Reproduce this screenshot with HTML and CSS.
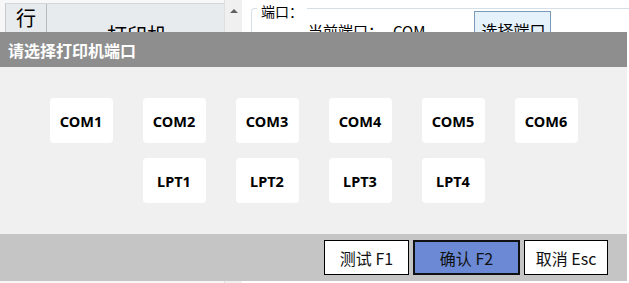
FILE: index.html
```html
<!DOCTYPE html>
<html lang="zh">
<head>
<meta charset="utf-8">
<title>选择打印机端口</title>
<link rel="stylesheet" href="styles.css">
</head>
<body>
<div class="app">
  <div class="table-panel">
    <div class="table-head">
      <div class="cell cell-row">行</div>
      <div class="cell cell-name">打印机</div>
    </div>
  </div>
  <div class="scrollbar"><span class="arrow"></span></div>
  <div class="settings">
    <div class="group">
      <div class="group-title">端口：</div>
      <div class="group-row">
        <span class="label">当前端口：</span>
        <span class="value">COM</span>
        <span class="pick-btn">选择端口</span>
      </div>
    </div>
  </div>
</div>

<div class="dialog">
  <div class="dialog-title">请选择打印机端口</div>
  <div class="dialog-body">
    <div class="ports">
      <div class="port">COM1</div>
      <div class="port">COM2</div>
      <div class="port">COM3</div>
      <div class="port">COM4</div>
      <div class="port">COM5</div>
      <div class="port">COM6</div>
      <div class="port">LPT1</div>
      <div class="port">LPT2</div>
      <div class="port">LPT3</div>
      <div class="port">LPT4</div>
    </div>
  </div>
  <div class="dialog-foot">
    <div class="btn btn-test">测试 F1</div>
    <div class="btn btn-ok">确认 F2</div>
    <div class="btn btn-cancel">取消 Esc</div>
  </div>
</div>
</body>
</html>
```
FILE: styles.css
```css
* { box-sizing: border-box; }
html, body {
  margin: 0;
  padding: 0;
}
body {
  width: 629px;
  height: 283px;
  overflow: hidden;
  position: relative;
  background: #f0f0f0;
  font-family: "Noto Sans CJK SC", "Noto Sans", sans-serif;
  color: #000;
}

/* background application */
.app {
  display: flex;
  height: 283px;
  background: #ffffff;
}
.table-panel {
  width: 225px;
  padding: 3px 0 0 5px;
  background: #f7f7f7;
  border-right: 1px solid #e0e0e0;
}
.table-head {
  display: flex;
  height: 60px;
  background: #e8ebee;
  border-top: 1px solid #d4d7da;
  border-left: 1px solid #c8cbce;
}
.cell {
  font-size: 20px;
  line-height: 20px;
}
.cell-row {
  width: 41px;
  padding: 4px 0 0 10px;
  border-right: 1px solid #b8bbbe;
}
.cell-name {
  flex: 1;
  padding: 21px 0 0 60px;
}
.scrollbar {
  width: 17px;
  background: #f0f0f0;
  display: flex;
  justify-content: center;
  padding-top: 9px;
}
.arrow {
  width: 0;
  height: 0;
  border-left: 4px solid transparent;
  border-right: 4px solid transparent;
  border-bottom: 4px solid #606060;
}
.settings {
  flex: 1;
  padding: 8px 0 0 9px;
}
.group {
  position: relative;
  height: 80px;
  border-top: 1px solid #d5dfe5;
  border-left: 1px solid #d5dfe5;
  border-radius: 4px 0 0 0;
}
.group-title {
  position: absolute;
  left: 5px;
  top: -5px;
  padding: 0 4px;
  background: #ffffff;
  font-size: 14px;
  line-height: 14px;
}
.group-row {
  display: flex;
  align-items: flex-start;
  padding: 12px 0 0 56px;
  font-size: 15px;
  line-height: 20px;
}
.value {
  margin-left: 10px;
}
.pick-btn {
  margin-left: 49px;
  margin-top: -10px;
  width: 77px;
  height: 40px;
  border: 1px solid #7a9ab8;
  background: #e5f1fb;
  font-size: 16px;
  line-height: 20px;
  padding: 8px 0 0 6px;
}

/* modal dialog over the application */
.dialog {
  position: absolute;
  left: 0;
  top: 32px;
  width: 627px;
  height: 249px;
  display: flex;
  flex-direction: column;
}
.dialog-title {
  height: 35px;
  background: #8e8e8e;
  color: #ffffff;
  font-size: 16px;
  font-weight: bold;
  display: flex;
  align-items: center;
  padding-left: 8px;
}
.dialog-body {
  height: 167px;
  background: #f0f0f0;
  display: flex;
  align-items: center;
  justify-content: center;
}
.ports {
  width: 528px;
  display: flex;
  flex-wrap: wrap;
  justify-content: center;
  gap: 15px 30px;
}
.port {
  width: 63px;
  height: 45px;
  background: #ffffff;
  border-radius: 4px;
  display: flex;
  align-items: center;
  justify-content: center;
  font-family: "Noto Sans", "Noto Sans CJK SC", sans-serif;
  font-size: 14.5px;
  font-weight: bold;
  color: #000;
}
.dialog-foot {
  height: 47px;
  background: #c5c5c5;
  display: flex;
  justify-content: flex-end;
  align-items: center;
  gap: 4px;
  padding-right: 19px;
}
.btn {
  height: 35px;
  display: flex;
  align-items: center;
  justify-content: center;
  font-size: 16px;
  color: #111;
  background: #ffffff;
  border: 1px solid #000;
}
.btn-test { width: 85px; }
.btn-ok {
  width: 107px;
  background: #6b89d4;
  border: 2px solid #111;
}
.btn-cancel { width: 84px; }
```
